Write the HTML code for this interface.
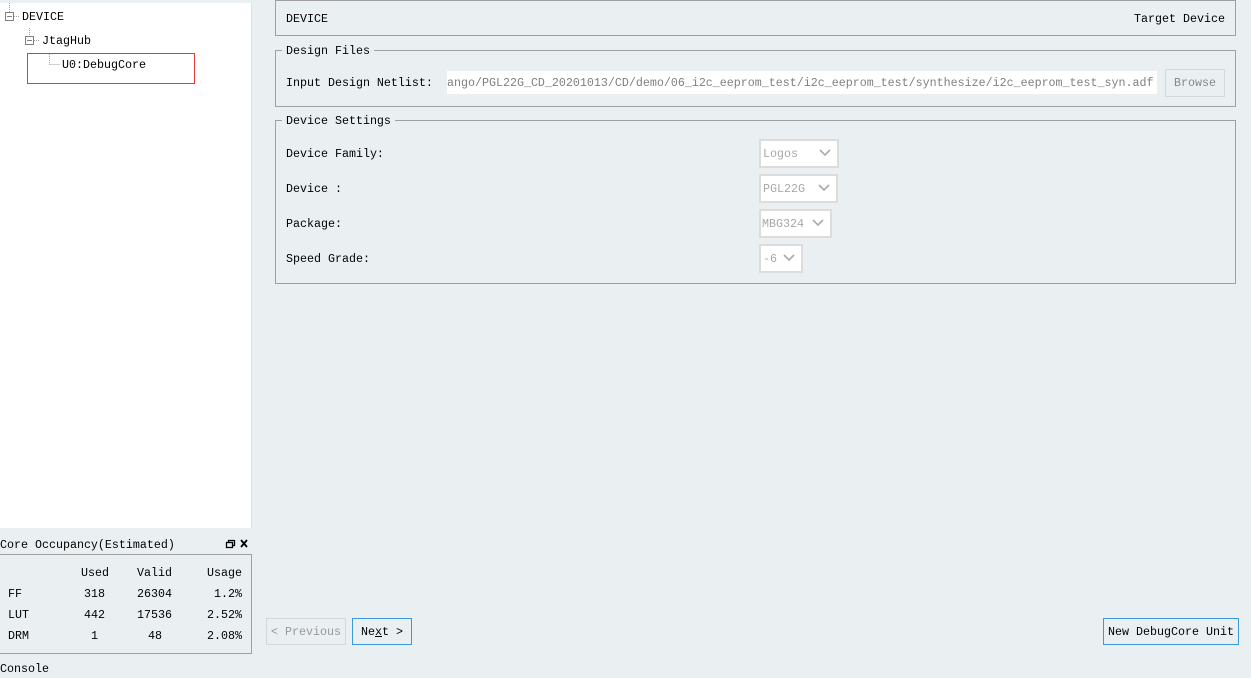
<!DOCTYPE html>
<html><head><style>
body{margin:0;width:1251px;height:678px;background:#eaeff2;font-family:"Liberation Mono",monospace;font-size:11.67px;line-height:15px;color:#000;position:relative;overflow:hidden}
.a{position:absolute;white-space:pre}
.box{position:absolute;border:1px solid #a0a0a0;box-sizing:border-box}
.leg{position:absolute;background:#eaeff2;padding:0 4px;white-space:pre}
.cb{position:absolute;background:#fff;border:2px solid #dcdcdc;box-sizing:border-box;color:#a8a8a8;line-height:26px;padding-left:2px}
.cb svg{position:absolute;right:6px;top:8px}
.btn{position:absolute;box-sizing:border-box;text-align:center;line-height:27px}
</style></head><body>
<div class="a" style="left:0;top:3px;width:252px;height:525px;background:#fff;border-right:1px solid #dde1e4;box-sizing:border-box"></div>
<svg class="a" style="left:0;top:0" width="200" height="90">
<g fill="none" stroke="#808080" stroke-width="1">
<rect x="5.5" y="12.5" width="8" height="8"/><line x1="7" y1="16.5" x2="12" y2="16.5"/>
<rect x="25.5" y="36.5" width="8" height="8"/><line x1="27" y1="40.5" x2="32" y2="40.5"/>
</g>
<g stroke="#a0a0a0" stroke-dasharray="1,1"><line x1="9.5" y1="3" x2="9.5" y2="12"/><line x1="14" y1="16.5" x2="20" y2="16.5"/>
<line x1="29.5" y1="28" x2="29.5" y2="36"/><line x1="34" y1="40.5" x2="40" y2="40.5"/>
<line x1="49.5" y1="54" x2="49.5" y2="64.5"/><line x1="49.5" y1="64.5" x2="60" y2="64.5"/></g>
<rect x="27.5" y="53.5" width="167" height="30" fill="none" stroke="#e53935"/>
</svg>
<div class="a" style="left:22px;top:10px">DEVICE</div>
<div class="a" style="left:42px;top:34px">JtagHub</div>
<div class="a" style="left:62px;top:58px">U0:DebugCore</div>
<div class="a" style="left:0;top:538px">Core Occupancy(Estimated)</div>
<svg class="a" style="left:225px;top:538px" width="24" height="12"><g fill="none" stroke="#000" stroke-width="1.3"><rect x="1.5" y="4.5" width="6" height="5"/><path d="M3.5 4.5V2.5h6v5h-2"/><path d="M16 2l6 7M22 2l-6 7" stroke-width="1.8"/></g></svg>
<div class="a" style="left:0;top:554px;width:252px;height:100px;border:1px solid #a0a0a0;border-left:none;background:#eaeff2;box-sizing:border-box"></div>
<div class="a" style="left:81px;top:566px">Used</div><div class="a" style="left:137px;top:566px">Valid</div><div class="a" style="left:207px;top:566px">Usage</div>
<div class="a" style="left:8px;top:587px">FF</div><div class="a" style="left:84px;top:587px">318</div><div class="a" style="left:137px;top:587px">26304</div><div class="a" style="left:214px;top:587px">1.2%</div>
<div class="a" style="left:8px;top:608px">LUT</div><div class="a" style="left:84px;top:608px">442</div><div class="a" style="left:137px;top:608px">17536</div><div class="a" style="left:207px;top:608px">2.52%</div>
<div class="a" style="left:8px;top:629px">DRM</div><div class="a" style="left:91px;top:629px">1</div><div class="a" style="left:148px;top:629px">48</div><div class="a" style="left:207px;top:629px">2.08%</div>
<div class="a" style="left:0;top:662px">Console</div>
<div class="box" style="left:275px;top:0;width:961px;height:36px"></div>
<div class="a" style="left:286px;top:12px">DEVICE</div>
<div class="a" style="left:1134px;top:12px">Target Device</div>
<div class="box" style="left:275px;top:50px;width:961px;height:57px"></div>
<div class="leg" style="left:282px;top:44px">Design Files</div>
<div class="a" style="left:286px;top:76px">Input Design Netlist:</div>
<div class="a" style="left:447px;top:71px;width:710px;height:23px;background:#fff;color:#808080;line-height:24px;overflow:hidden">ango/PGL22G_CD_20201013/CD/demo/06_i2c_eeprom_test/i2c_eeprom_test/synthesize/i2c_eeprom_test_syn.adf</div>
<div class="btn" style="left:1165px;top:69px;width:60px;height:28px;border:1px solid #d4d8da;color:#888">Browse</div>
<div class="box" style="left:275px;top:120px;width:961px;height:164px"></div>
<div class="leg" style="left:282px;top:114px">Device Settings</div>
<div class="a" style="left:286px;top:147px">Device Family:</div>
<div class="a" style="left:286px;top:182px">Device :</div>
<div class="a" style="left:286px;top:217px">Package:</div>
<div class="a" style="left:286px;top:252px">Speed Grade:</div>
<div class="cb" style="left:759px;top:139px;width:80px;height:29px">Logos<svg width="12" height="8"><path d="M1 1l5 5 5-5" fill="none" stroke="#aaa" stroke-width="1.6"/></svg></div>
<div class="cb" style="left:759px;top:174px;width:79px;height:29px">PGL22G<svg width="12" height="8"><path d="M1 1l5 5 5-5" fill="none" stroke="#aaa" stroke-width="1.6"/></svg></div>
<div class="cb" style="left:759px;top:209px;width:73px;height:29px;padding-left:1px">MBG324<svg width="12" height="8"><path d="M1 1l5 5 5-5" fill="none" stroke="#aaa" stroke-width="1.6"/></svg></div>
<div class="cb" style="left:759px;top:244px;width:44px;height:29px">-6<svg width="12" height="8"><path d="M1 1l5 5 5-5" fill="none" stroke="#aaa" stroke-width="1.6"/></svg></div>
<div class="btn" style="left:266px;top:618px;width:80px;height:27px;border:1px solid #d4d8da;color:#999">&lt; Previous</div>
<div class="btn" style="left:352px;top:618px;width:60px;height:27px;border:1px solid #3a9ad9">Ne<u>x</u>t &gt;</div>
<div class="btn" style="left:1103px;top:618px;width:136px;height:27px;border:1px solid #3a9ad9">New DebugCore Unit</div>
</body></html>
